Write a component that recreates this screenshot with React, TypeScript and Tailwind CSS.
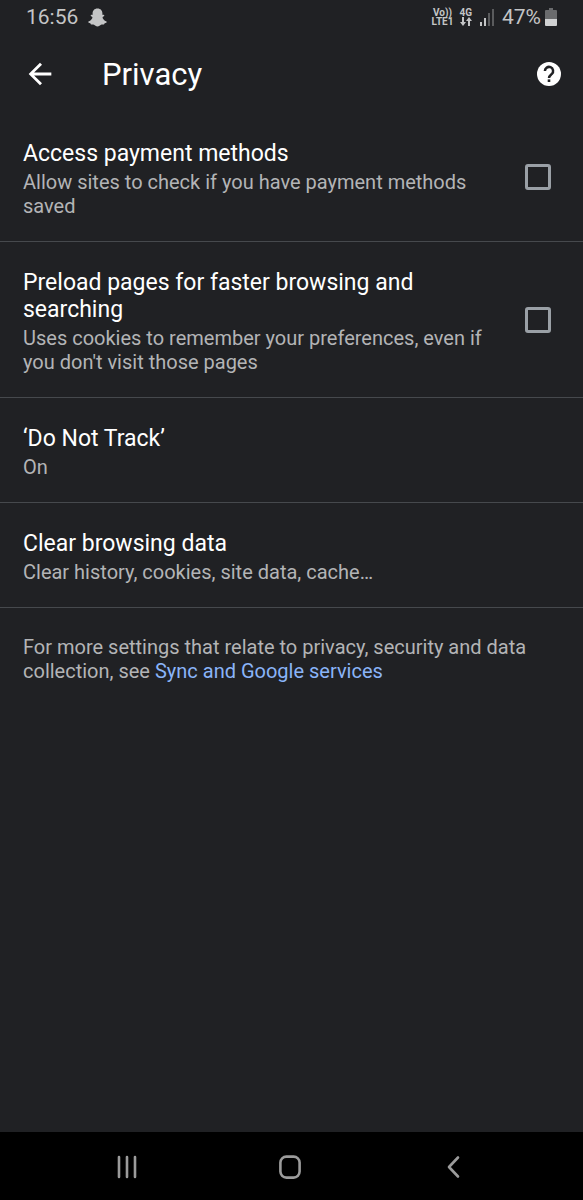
import { ReactNode } from 'react';
import { MdArrowBack } from 'react-icons/md';

interface PreferenceTextProps {
  title: string;
  summary: string;
}

function PreferenceText({ title, summary }: PreferenceTextProps) {
  return (
    <span className="flex min-w-0 flex-1 flex-col gap-[3px] text-left">
      <span className="text-[23px] leading-[27px] text-white">{title}</span>
      <span className="text-[20px] leading-6 text-[#b3b4b6]">{summary}</span>
    </span>
  );
}

function CheckboxPreference({ id, title, summary }: PreferenceTextProps & { id: string }) {
  return (
    <label
      htmlFor={id}
      className="flex items-center gap-9 border-b border-[#46494d] pt-[27px] pr-8 pb-[23px] pl-[23px]"
    >
      <PreferenceText title={title} summary={summary} />
      <span className="flex self-stretch pb-1">
        <input
          id={id}
          type="checkbox"
          className="size-[26px] shrink-0 appearance-none self-center rounded-[3px] border-[3px] border-[#9aa0a6] checked:bg-[#8ab4f8]"
        />
      </span>
    </label>
  );
}

function LinkPreference({ title, summary }: PreferenceTextProps) {
  return (
    <button type="button" className="flex border-b border-[#46494d] pt-[27px] pr-8 pb-[23px] pl-[23px]">
      <PreferenceText title={title} summary={summary} />
    </button>
  );
}

function SnapchatIcon() {
  return (
    <svg viewBox="0 0 19 19" className="size-[19px]" fill="currentColor" aria-hidden="true">
      <path d="M9.5 .5c3.200 0 4.900 2.200 4.900 4.900v1.500c.8-.2 1.900-.1 1.900.6 0 .8-1.500 1.100-1.700 1.800-.2.900 1.300 3.300 3.900 4.200.6.300.3 1.200-1.900 1.700-.2.500-.3 1.100-.8 1.200-1 .1-1.900-.2-2.800.4-.9.700-2 1.700-3.500 1.700s-2.600-1-3.500-1.700c-.9-.6-1.800-.3-2.800-.4-.5-.1-.6-.7-.8-1.200C.2 14.700-.1 13.800.5 13.500c2.600-.9 4.100-3.300 3.900-4.200-.2-.7-1.700-1-1.700-1.800 0-.7 1.100-.8 1.900-.6V5.400C4.600 2.700 6.300.5 9.500.5z" />
    </svg>
  );
}

function HelpIcon() {
  return (
    <svg viewBox="0 0 24 24" className="size-6" aria-hidden="true">
      <circle cx="12" cy="12" r="12" fill="#fff" />
      <path
        d="M7.900 9a4.100 4.100 0 1 1 7 2.900c-1.500 1.400-2.900 2-2.900 4.100"
        fill="none"
        stroke="#202124"
        strokeWidth="2.5"
      />
      <rect x="10.700" y="17.400" width="2.600" height="2.600" fill="#202124" />
    </svg>
  );
}

function StatusBar() {
  return (
    <div className="flex h-[34px] items-center justify-between pr-[26px] pl-[26px] text-[#c4c5c6]">
      <div className="flex items-center gap-[10px]">
        <span className="text-[21px] leading-6">16:56</span>
        <SnapchatIcon />
      </div>
      <div className="flex items-center gap-[6px]">
        <span className="flex flex-col items-center text-[10px] leading-[9px] font-bold">
          <span>Vo))</span>
          <span>LTE1</span>
        </span>
        <span className="flex flex-col items-center text-[10px] leading-[9px] font-bold">
          <span>4G</span>
          <svg viewBox="0 0 12 9" className="h-[9px] w-3" fill="currentColor" aria-hidden="true">
            <path d="M2 0h2v5h2L3 9 0 5h2z" />
            <path d="M8 9h2V4h2L9 0 6 4h2z" />
          </svg>
        </span>
        <svg viewBox="0 0 16 17" className="ml-[2px] h-[17px] w-4" aria-hidden="true">
          <rect x="0" y="13" width="2" height="4" fill="#c4c5c6" />
          <rect x="4" y="9" width="2" height="8" fill="#c4c5c6" />
          <rect x="8" y="4" width="2" height="13" fill="#5a5b5d" />
          <rect x="12" y="0" width="2" height="17" fill="#5a5b5d" />
        </svg>
        <span className="flex items-center gap-1">
          <span className="text-[21px] leading-6">47%</span>
          <svg viewBox="0 0 12 18" className="h-[18px] w-3" aria-hidden="true">
            <path d="M4 0h4v2h3q1 0 1 1v8H0V3q0-1 1-1h3z" fill="#6a6b6d" />
            <path d="M0 11h12v6q0 1-1 1H1q-1 0-1-1z" fill="#d0d1d2" />
          </svg>
        </span>
      </div>
    </div>
  );
}

function NavButton({ label, children }: { label: string; children: ReactNode }) {
  return (
    <button type="button" aria-label={label} className="flex items-center justify-center">
      <svg
        viewBox="0 0 24 24"
        className="size-6"
        fill="none"
        stroke="#9b9b9b"
        strokeWidth="2.6"
        strokeLinecap="round"
        strokeLinejoin="round"
      >
        {children}
      </svg>
    </button>
  );
}

export default function App() {
  return (
    <div className="flex min-h-screen flex-col bg-[#202124] font-[Roboto,sans-serif]">
      <StatusBar />

      <header className="flex h-[79px] items-center pr-[22px] pl-[23px] text-white">
        <button type="button" aria-label="Back">
          <MdArrowBack className="size-[34px]" />
        </button>
        <h1 className="ml-[45px] flex-1 pt-[3px] text-[31px] leading-9">Privacy</h1>
        <button type="button" aria-label="Help">
          <HelpIcon />
        </button>
      </header>

      <main className="flex flex-1 flex-col">
        <CheckboxPreference
          id="payment-methods"
          title="Access payment methods"
          summary="Allow sites to check if you have payment methods saved"
        />
        <CheckboxPreference
          id="preload-pages"
          title="Preload pages for faster browsing and searching"
          summary="Uses cookies to remember your preferences, even if you don't visit those pages"
        />
        <LinkPreference title="‘Do Not Track’" summary="On" />
        <LinkPreference title="Clear browsing data" summary="Clear history, cookies, site data, cache…" />
        <p className="pt-[27px] pr-8 pb-[23px] pl-[23px] text-[20px] leading-6 text-[#b3b4b6]">
          For more settings that relate to privacy, security and data collection, see{' '}
          <a href="#sync" className="text-[#8ab4f8]">
            Sync and Google services
          </a>
        </p>
      </main>

      <nav className="grid h-[68px] grid-cols-3 bg-black pt-[2px] pr-[49px] pl-[45px]">
        <NavButton label="Recent apps">
          <path d="M4 2v20M12 2v20M20 2v20" />
        </NavButton>
        <NavButton label="Home">
          <rect x="2.4" y="1.6" width="19.2" height="21" rx="6" />
        </NavButton>
        <NavButton label="Back">
          <path d="M17 2.500 8 12l9 9.500" />
        </NavButton>
      </nav>
    </div>
  );
}
